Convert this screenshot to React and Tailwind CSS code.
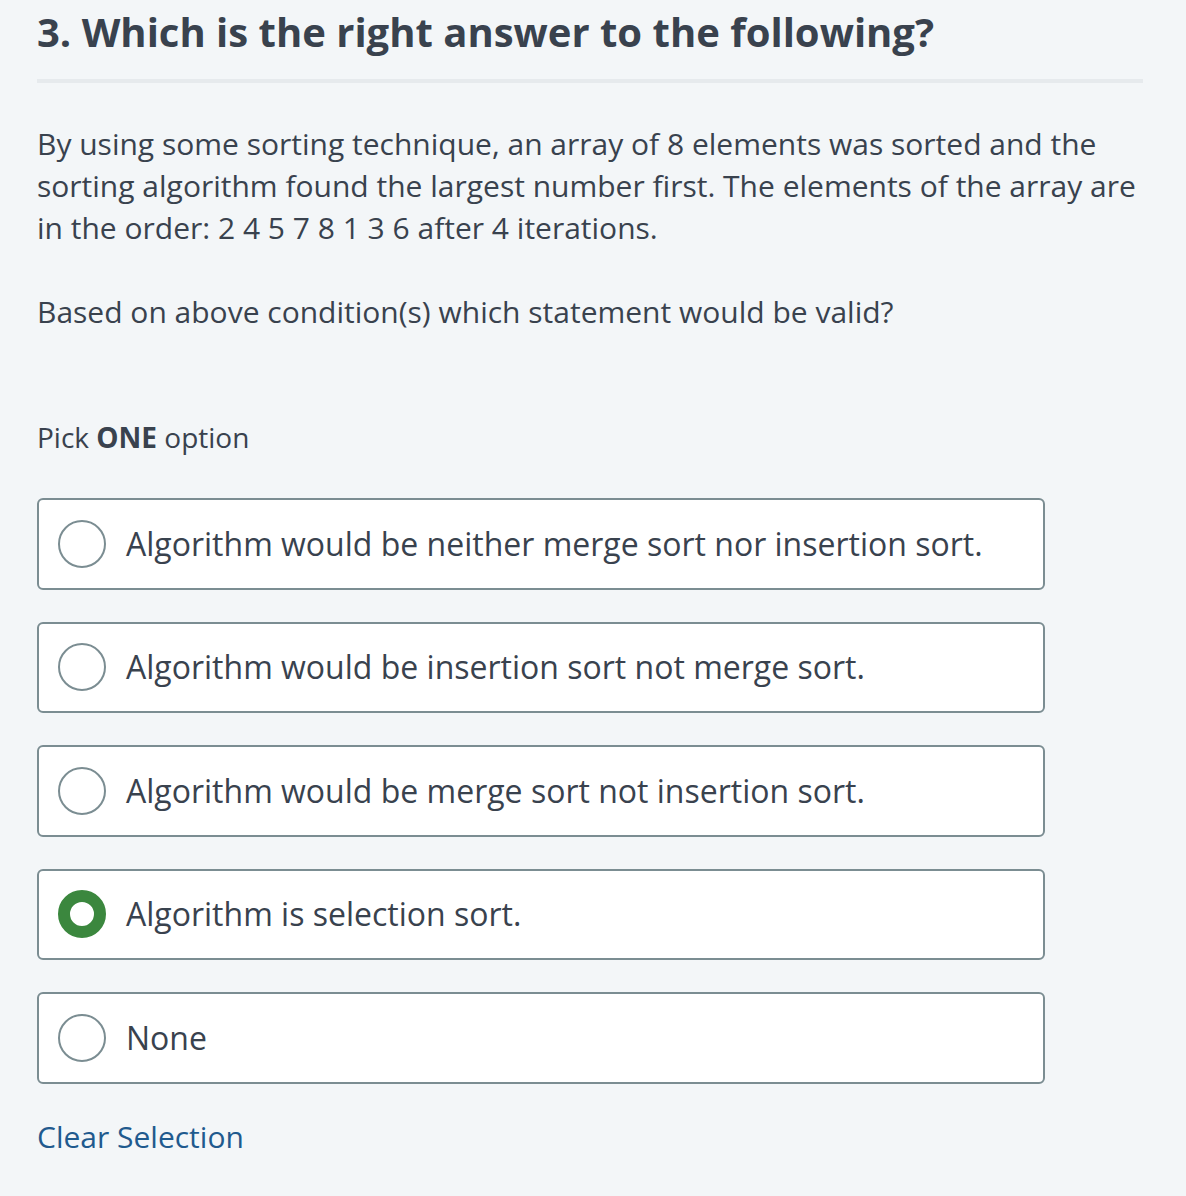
import React, { useState } from 'react'

const options = [
  'Algorithm would be neither merge sort nor insertion sort.',
  'Algorithm would be insertion sort not merge sort.',
  'Algorithm would be merge sort not insertion sort.',
  'Algorithm is selection sort.',
  'None',
]

function Radio({ checked }) {
  if (checked) {
    return <span className="w-12 h-12 rounded-full border-[12px] border-[#3b873e] bg-white flex-shrink-0" />
  }
  return <span className="w-12 h-12 rounded-full border-2 border-[#7b8d92] bg-white flex-shrink-0" />
}

export default function App() {
  const [selected, setSelected] = useState(3)

  return (
    <div className="min-h-screen bg-[#f3f6f8] text-[#39424e] font-['Open_Sans',sans-serif] pl-[37px] pr-[43px]">
      <h1 className="text-[40px] leading-[63px] font-bold">3. Which is the right answer to the following?</h1>
      <div className="mt-4 h-[4px] bg-[#e6eaed]" />

      <div className="mt-[40px] text-[30px] leading-[42px]">
        <p>
          By using some sorting technique, an array of 8 elements was sorted and the sorting algorithm found the largest number first. The elements of the array are in the order: 2 4 5 7 8 1 3 6 after 4 iterations.
        </p>
        <p className="mt-[42px]">Based on above condition(s) which statement would be valid?</p>
      </div>

      <p className="mt-[83px] text-[28px] leading-[42px]">
        Pick <strong className="font-bold">ONE</strong> option
      </p>

      <div className="mt-[40px] w-[1008px] flex flex-col gap-8">
        {options.map((label, i) => (
          <button
            key={label}
            onClick={() => setSelected(i)}
            className="h-[91.5px] flex items-center gap-[20px] pl-[19px] pr-6 bg-white border-2 border-[#7b8d92] rounded-md text-left"
          >
            <Radio checked={selected === i} />
            <span className="text-[32px] leading-[42px]">{label}</span>
          </button>
        ))}
      </div>

      <button
        onClick={() => setSelected(null)}
        className="mt-8 block text-[30px] leading-[42px] text-[#1f5a8e]"
      >
        Clear Selection
      </button>
    </div>
  )
}
